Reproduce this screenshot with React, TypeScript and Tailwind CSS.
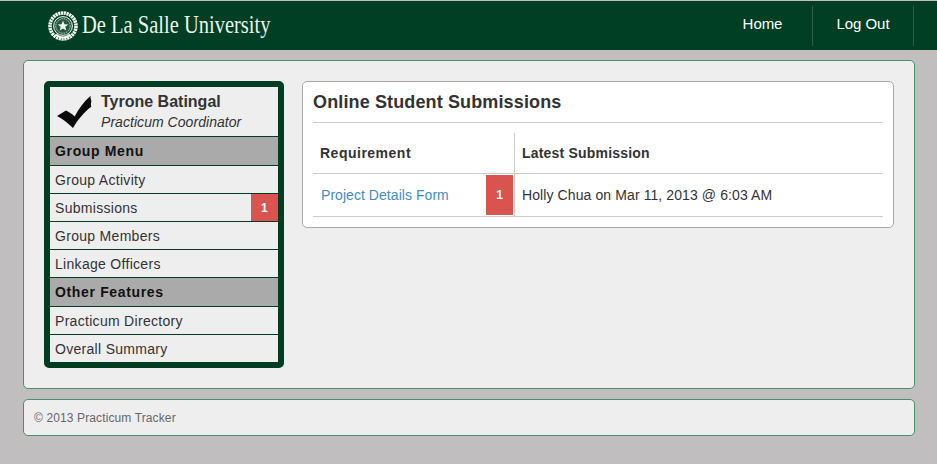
const sansStack = "font-['Liberation_Sans',Arial,sans-serif]";

const Seal = () => (
  <svg width="30" height="30" viewBox="0 0 30 30" className="shrink-0">
    <circle cx="15" cy="15" r="13" fill="none" stroke="#f2f5f2" strokeWidth="3.6" strokeDasharray="2.2 0.6" />
    <circle cx="15" cy="15" r="9.4" fill="#24593f" stroke="#f2f5f2" strokeWidth="1" />
    <circle cx="15" cy="15" r="7.2" fill="none" stroke="#c8d6cc" strokeWidth="0.9" strokeDasharray="1.5 0.8" />
    <path
      d="M15 9.6l1.4 3.6 3.9.2-3 2.4 1 3.7-3.3-2.1-3.3 2.1 1-3.7-3-2.4 3.9-.2z"
      fill="#f2f5f2"
    />
    <path d="M8 23.5a10 10 0 0 0 14 0" fill="none" stroke="#f2f5f2" strokeWidth="1.8" />
  </svg>
);

const Check = () => (
  <svg width="35" height="34" viewBox="0 0 35 34" className="shrink-0">
    <path
      d="M0 21L9 15.5C12 17 15.5 19 17.7 21.5C21.5 14 26.5 7 33.6 0.7C33 3.5 34.5 4.5 34.3 6C34.2 8 33.5 9.5 34.3 11.7C27 17 20.5 25 16 33C11.5 28.5 6 24 0 21Z"
      fill="#0a0a0a"
    />
  </svg>
);

const Badge = ({ className }: { className: string }) => (
  <span
    className={`flex items-center justify-center bg-[#d9534f] text-xs font-bold text-white ${className}`}
  >
    1
  </span>
);

const MenuHeading = ({ label }: { label: string }) => (
  <div className="flex h-[29px] items-center border-b border-[#003d22] bg-[#aaaaaa] pl-[5px] text-sm font-bold tracking-[0.65px] text-[#111111]">
    {label}
  </div>
);

const MenuItem = ({ label, badge, last }: { label: string; badge?: boolean; last?: boolean }) => (
  <div
    className={`flex items-center justify-between pl-[5px] text-sm tracking-[0.3px] text-[#333333] ${
      last ? "h-[27px]" : "h-[28px] border-b border-[#003d22]"
    }`}
  >
    <span>{label}</span>
    {badge && <Badge className="h-[27px] w-[27px]" />}
  </div>
);

const Sidebar = () => (
  <aside className="w-[240px] shrink-0 self-start rounded-[5px] border-[6px] border-[#003d22] bg-[#eeeeee]">
    <div className="flex h-[50px] items-center border-b border-[#003d22] pl-[7px]">
      <Check />
      <div className="ml-[9px] text-[#333333]">
        <div className="text-base leading-[20px] font-bold">Tyrone Batingal</div>
        <div className="text-sm leading-[20px] tracking-[0.05px] italic">Practicum Coordinator</div>
      </div>
    </div>
    <MenuHeading label="Group Menu" />
    <MenuItem label="Group Activity" />
    <MenuItem label="Submissions" badge />
    <MenuItem label="Group Members" />
    <MenuItem label="Linkage Officers" />
    <MenuHeading label="Other Features" />
    <MenuItem label="Practicum Directory" />
    <MenuItem label="Overall Summary" last />
  </aside>
);

const SubmissionsCard = () => (
  <section className="h-[147px] flex-1 rounded-[5px] border border-[#aaaaaa] bg-white px-[10px]">
    <h1 className="flex h-[41px] items-center border-b border-[#cccccc] text-lg font-bold tracking-[0.13px] text-[#333333]">
      Online Student Submissions
    </h1>
    <div className="mt-[10px] grid grid-cols-[202px_1fr] text-sm">
      <div className="flex h-[41px] items-center border-r border-b border-[#cccccc] pl-[7px] font-bold tracking-[0.5px] text-[#333333]">
        Requirement
      </div>
      <div className="flex h-[41px] items-center border-b border-[#cccccc] pl-[7px] font-bold tracking-[0.2px] text-[#333333]">
        Latest Submission
      </div>
      <div className="flex h-[43px] items-center justify-between border-r border-b border-[#cccccc] pr-px pl-[8px]">
        <a className="tracking-[0.05px] text-[#428bca]">Project Details Form</a>
        <Badge className="h-[40px] w-[27px]" />
      </div>
      <div className="flex h-[43px] items-center border-b border-[#cccccc] pl-[7px] tracking-[0.1px] text-[#333333]">
        Holly Chua on Mar 11, 2013 @ 6:03 AM
      </div>
    </div>
  </section>
);

export default function App() {
  return (
    <div className={`${sansStack} h-[464px] overflow-hidden bg-[#c0bebe] pt-px`}>
      <header className="flex h-[49px] items-center justify-between bg-[#003f23] pr-[23px] pl-[48px]">
        <div className="flex items-center gap-[4px]">
          <Seal />
          <span className="origin-left scale-x-[0.82] pb-[2px] font-['Liberation_Serif',serif] text-[25px] text-[#eef3ee]">
            De La Salle University
          </span>
        </div>
        <nav className="flex h-[40px] items-center text-[15px] tracking-[-0.05px] text-white">
          <a className="flex h-full w-[75px] items-center justify-center border-r border-[#2c5f47] pr-[25px] pb-[2px]">
            Home
          </a>
          <a className="flex h-full w-[101px] items-center justify-center border-r border-[#2c5f47] pb-[2px]">
            Log Out
          </a>
        </nav>
      </header>

      <main className="mr-[22px] ml-[23px] mt-[10px] flex h-[329px] gap-[18px] rounded-[5px] border border-[#4b9069] bg-[#eeeeee] p-[20px]">
        <Sidebar />
        <SubmissionsCard />
      </main>

      <footer className="mr-[22px] ml-[23px] mt-[10px] flex h-[37px] items-center rounded-[5px] border border-[#4b9069] bg-[#eeeeee] pl-[10px] text-xs tracking-[0.12px] text-[#666666]">
        © 2013 Practicum Tracker
      </footer>
    </div>
  );
}
